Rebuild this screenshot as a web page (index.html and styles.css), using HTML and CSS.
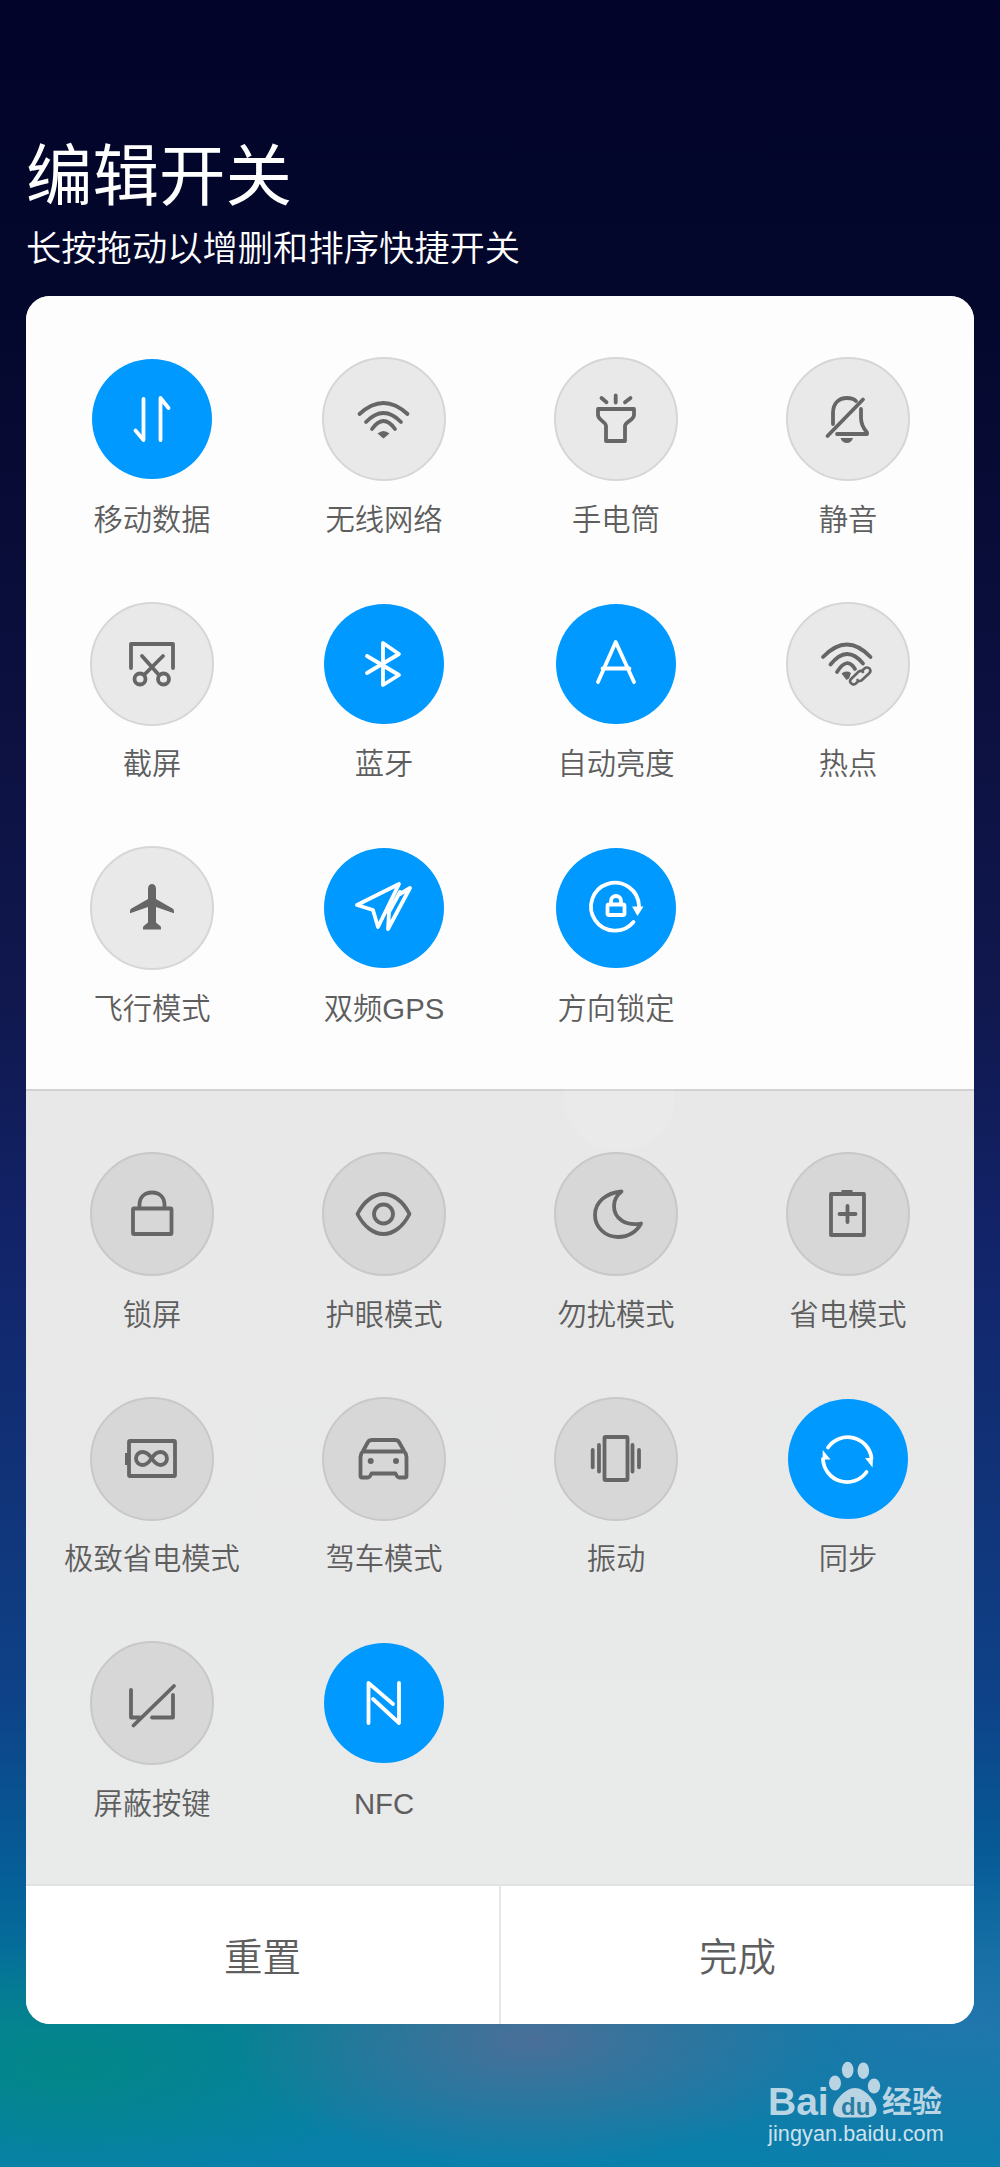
FILE: index.html
```html
<!DOCTYPE html>
<html lang="zh-CN">
<head>
<meta charset="utf-8">
<title>编辑开关</title>
<link rel="stylesheet" href="styles.css">
</head>
<body>
<main class="page">
  <header class="head">
    <h1 class="title">编辑开关</h1>
    <p class="sub">长按拖动以增删和排序快捷开关</p>
  </header>
  <section class="card">
    <div class="grid active-area">
      <div class="tile on"><div class="disc"><svg class="ico" viewBox="0 0 124 124"><path d="M53.5 42V83L45.5 73.5M70.5 83V41L78.5 51"/></svg></div><span class="label">移动数据</span></div>
      <div class="tile"><div class="disc"><svg class="ico" viewBox="0 0 124 124"><path d="M37.5 57Q61.5 35 85.5 57M44 65Q61.5 47 79 65M50 72Q61.5 56 73 72"/><path class="solid" d="M55.5 76.5Q61.5 71.5 67.5 76.5L61.5 81.5Z"/></svg></div><span class="label">无线网络</span></div>
      <div class="tile"><div class="disc"><svg class="ico" viewBox="0 0 124 124"><path d="M61.7 38.500V45.500M47.500 41L52.500 45.300M76.500 41L71 45.300"/><path d="M44 52H80V58C80 63 71 65 71 69V84H52V69C52 65 44 63 44 58Z"/></svg></div><span class="label">手电筒</span></div>
      <div class="tile"><div class="disc"><svg class="ico" viewBox="0 0 124 124"><path d="M47 67V56C47 46 53 41 61 41C65 41 68 42 70 44M75 52V61C75 68 78 72 81 75.500V77H51M77 42.500L41.500 79"/><path class="solid" d="M54.500 81H67C66 84.500 63.500 86 61 86C58 86 55.500 84.500 54.500 81Z"/></svg></div><span class="label">静音</span></div>

      <div class="tile"><div class="disc"><svg class="ico" viewBox="0 0 124 124"><path d="M41 66V42H83V66M52 54L69 73M73 54L54 73"/><circle cx="50" cy="77" r="5.500"/><circle cx="73.500" cy="77" r="5.500"/></svg></div><span class="label">截屏</span></div>
      <div class="tile on"><div class="disc"><svg class="ico" viewBox="0 0 124 124"><path d="M45 54L77 73L61 83V41L77 52L45 71"/></svg></div><span class="label">蓝牙</span></div>
      <div class="tile on"><div class="disc"><svg class="ico" viewBox="0 0 124 124"><path d="M44 80L61.700 40L80 80M48.500 66.500H75.500"/></svg></div><span class="label">自动亮度</span></div>
      <div class="tile"><div class="disc"><svg class="ico" viewBox="0 0 124 124"><path d="M37 55Q61 30 84.500 55M44.500 62.500Q61 42 77 61.500M51 70Q61 54 69 67"/><path class="solid" d="M55.500 71.500Q60 68 65 71L63 76.500L60.500 78Z"/><path class="thin" d="M72 79.500L69.800 81.500C68 83 66 82.500 64.800 81C63.800 79.800 64 78 65.300 76.800L72.500 69.800C74 68.400 76 68.600 77 70M76 68.800L78.500 66.500C80 65 82.300 65.200 83.500 66.500C84.800 68 84.500 70 83.200 71.300L76 78C74.500 79.500 72.500 79.300 71.500 78"/></svg></div><span class="label">热点</span></div>

      <div class="tile"><div class="disc"><svg class="ico" viewBox="0 0 124 124"><path class="solid" d="M62 38C64.200 38 66 40 66 42.500V53L82.500 62.500C83.800 63.300 84 64 84 67.200L66 61V76.500L70.800 80.500C71 81.500 71 82.500 71 83.500H53C53 82.500 53 81.500 53.200 80.500L58 76.500V61L40 67.200C40 64 40.200 63.300 41.500 62.500L58 53V42.500C58 40 59.800 38 62 38Z"/></svg></div><span class="label">飞行模式</span></div>
      <div class="tile on"><div class="disc"><svg class="ico" viewBox="0 0 124 124"><path d="M35 59L77 38L56 81L51 64ZM78 46L67 66L66 83L88 42L78 48"/></svg></div><span class="label">双频GPS</span></div>
      <div class="tile on"><div class="disc"><svg class="ico" viewBox="0 0 124 124"><path d="M79.500 76A24 24 0 1 1 85 60"/><path class="solid" d="M78 60.500H89.500L83.500 70Z"/><rect x="53.500" y="58.500" width="17" height="10.500" rx="1.500"/><path d="M57 58V55A5 5 0 0 1 67 55V58"/></svg></div><span class="label">方向锁定</span></div>
    </div>

    <div class="grid tray">
      <div class="tile"><div class="disc"><svg class="ico" viewBox="0 0 124 124"><rect x="43" y="56.500" width="38.500" height="25.500" rx="1"/><path d="M49.500 56V53C49.500 45 54.500 40.500 62 40.500S74.500 45 74.500 53V56"/></svg></div><span class="label">锁屏</span></div>
      <div class="tile"><div class="disc"><svg class="ico" viewBox="0 0 124 124"><path d="M35.500 62C42 49 52 42 61.500 42S81 49 87.500 62C81 75 71 82 61.500 82S42 75 35.500 62Z"/><circle cx="61.500" cy="62" r="9.500"/></svg></div><span class="label">护眼模式</span></div>
      <div class="tile"><div class="disc"><svg class="ico" viewBox="0 0 124 124"><path d="M67.500 39.500C52 41 41 50 41 63C41 75 51 85 64 85C75 85 83 79 87 71.500C72 74 60 67 60 54C60 48 63 43 67.500 39.500Z"/></svg></div><span class="label">勿扰模式</span></div>
      <div class="tile"><div class="disc"><svg class="ico" viewBox="0 0 124 124"><path d="M45 83V42H78V83Z"/><path class="solid" d="M55.500 38H66.500V42H55.500Z"/><path d="M53.500 62H69.500M61.500 54V70"/></svg></div><span class="label">省电模式</span></div>

      <div class="tile"><div class="disc"><svg class="ico" viewBox="0 0 124 124"><rect x="39" y="44" width="46" height="35" rx="1"/><path class="solid" d="M35 56H38.500V68H35Z"/><path d="M61.700 61.300C58 56 55 55 52.500 55A6.500 6.500 0 0 0 52.500 68C55 68 58 66.500 61.700 61.300C65 56 68 55 70.500 55A6.500 6.500 0 0 1 70.500 68C68 68 65 66.500 61.700 61.300Z"/></svg></div><span class="label">极致省电模式</span></div>
      <div class="tile"><div class="disc"><svg class="ico" viewBox="0 0 124 124"><path d="M38.500 79V60C38.500 57 40 55 41 54L46 45C47 43.500 48 43 50 43H73C75 43 76 43.500 77 45L82 54C83 55 84.500 57 84.500 60V79C84.500 80 84 80.500 83 80.500H77C75.500 80.500 75 79.500 74 77.500L73.500 76.500H49.500L49 77.500C48 79.500 47.500 80.500 46 80.500H40C39 80.500 38.500 80 38.500 79ZM41 54.500H82"/><circle class="solid" cx="48.700" cy="64" r="3"/><circle class="solid" cx="74" cy="64" r="3"/></svg></div><span class="label">驾车模式</span></div>
      <div class="tile"><div class="disc"><svg class="ico" viewBox="0 0 124 124"><rect x="50.500" y="40" width="23" height="43" rx="1"/><path d="M45 48V74.500M38.700 53V70.300M78.500 48V74.500M85 53V70.300"/></svg></div><span class="label">振动</span></div>
      <div class="tile on"><div class="disc"><svg class="ico" viewBox="0 0 124 124"><path d="M42 50.500A24 24 0 0 1 85.500 61M80.500 75A24 24 0 0 1 37 62"/><path class="solid" d="M79 61H87L86.500 70.500ZM36.700 53L44.500 62.500H36.700Z"/></svg></div><span class="label">同步</span></div>

      <div class="tile"><div class="disc"><svg class="ico" viewBox="0 0 124 124"><path d="M41 49V76.500H50M62 76.500H83V54M84 45L43.500 84.500"/></svg></div><span class="label">屏蔽按键</span></div>
      <div class="tile on"><div class="disc"><svg class="ico" viewBox="0 0 124 124"><path d="M46.500 82V42L71 63M51 58L77 82V42"/></svg></div><span class="label">NFC</span></div>
    </div>

    <footer class="actions">
      <div class="action">重置</div>
      <div class="action">完成</div>
    </footer>
    <div class="ghost"></div>
  </section>

  <svg class="mark" viewBox="0 0 200 90">
    <ellipse class="paw" cx="87.700" cy="10" rx="5.800" ry="8.300"/>
    <ellipse class="paw" cx="103.300" cy="10.700" rx="5.800" ry="8.300"/>
    <ellipse class="paw" cx="75" cy="23" rx="6" ry="7.500"/>
    <ellipse class="paw" cx="114" cy="26" rx="6.200" ry="7.500"/>
    <path class="paw" d="M95 28C85 28 73 42 73 50C73 55 77 57.500 83 57.500H106C112 57.500 116.500 55 116.500 50C116.500 42 105 28 95 28Z"/>
    <text class="mark-bai" x="8" y="55">Bai</text>
    <text class="mark-du" x="81" y="55">du</text>
    <text class="mark-cn" x="122" y="52">经验</text>
    <text class="mark-url" x="8" y="81">jingyan.baidu.com</text>
  </svg>
</main>
</body>
</html>
```
FILE: styles.css
```css
* { box-sizing: border-box; }
html, body { margin: 0; padding: 0; }
body { width: 1000px; height: 2167px; overflow: hidden; font-family: "Liberation Sans", "Noto Sans CJK SC", sans-serif; }

.page {
  position: relative;
  width: 1000px;
  height: 2167px;
  padding: 0 26px;
  background:
    radial-gradient(ellipse 300px 130px at 530px 2040px, rgba(120,100,150,.6), rgba(120,100,150,0)),
    radial-gradient(ellipse 420px 170px at 960px 2020px, rgba(60,110,190,.5), rgba(60,110,190,0)),
    radial-gradient(ellipse 320px 120px at 70px 2070px, rgba(0,140,120,.6), rgba(0,140,120,0)),
    linear-gradient(180deg, #02042a 0, #04072c 300px, #0b0f3d 650px, #10184e 1000px, #12246a 1250px, #113479 1500px, #0e4288 1700px, #055f98 1880px, #067f9c 2030px, #0880ac 2167px);
}

.head { padding-top: 135px; color: #fff; }
.title { margin: 0; font-size: 66.5px; line-height: 84px; font-weight: 400; }
.sub { margin: 0; font-size: 35.3px; line-height: 60px; font-weight: 350; }

.card {
  position: relative;
  margin-top: 17px;
  width: 948px;
  height: 1728px;
  border-radius: 24px;
  overflow: hidden;
  background: #fff;
  display: flex;
  flex-direction: column;
}

.grid {
  display: grid;
  grid-template-columns: repeat(4, 232px);
  grid-auto-rows: 244.6px;
  padding: 61px 10px 0;
}
.active-area { height: 795px; background: #fdfdfd; border-bottom: 2px solid #d2d2d2; }
.tray { height: 793px; background: linear-gradient(180deg, #e8e8e8, #e9eaea); }

.tile { display: flex; flex-direction: column; align-items: center; }
.disc {
  width: 124px;
  height: 124px;
  border-radius: 50%;
  background: #e9e9e9;
  border: 2px solid #d6d6d6;
  color: #666;
  flex: none;
}
.tray .disc { background: #d7d7d7; border-color: #c8c8c8; }
.tile.on .disc, .tray .tile.on .disc { background: #0099ff; background-clip: padding-box; border-color: transparent; color: #fff; }

.ico {
  display: block;
  width: 124px;
  height: 124px;
  margin: -2px;
  fill: none;
  stroke: currentColor;
  stroke-width: 3.8;
  stroke-linecap: round;
  stroke-linejoin: round;
}
.ico .solid { fill: currentColor; stroke: none; }
.ico .thin { stroke-width: 2.6; }

.label {
  margin-top: 18.5px;
  font-size: 29.3px;
  line-height: 40px;
  font-weight: 350;
  color: #5e5e5e;
  white-space: nowrap;
}

.actions { flex: 1; display: flex; background: #fff; border-top: 2px solid #e2e2e2; }
.action {
  flex: 1;
  display: flex;
  align-items: center;
  justify-content: center;
  padding-bottom: 2px;
  font-size: 38.5px;
  font-weight: 350;
  color: #5e5e5e;
}
.action + .action { border-left: 2px solid #e6e6e6; }

.ghost {
  position: absolute;
  left: 537px;
  top: 747px;
  width: 112px;
  height: 108px;
  border-radius: 50%;
  background: rgba(255,255,255,.1);
}

.mark { position: absolute; left: 760px; top: 2060px; width: 200px; height: 90px; }
.paw { fill: #b9d5e4; }
.mark-bai { font-family: "Liberation Sans", sans-serif; font-size: 39px; font-weight: 700; fill: #b9d5e4; }
.mark-du { font-family: "Liberation Sans", sans-serif; font-size: 24px; font-weight: 700; fill: #2b7ea3; }
.mark-cn { font-family: "Noto Sans CJK SC", sans-serif; font-size: 30px; font-weight: 700; fill: #b9d5e4; }
.mark-url { font-family: "Liberation Sans", sans-serif; font-size: 21.6px; letter-spacing: .1px; fill: #cfe2ec; }
```
